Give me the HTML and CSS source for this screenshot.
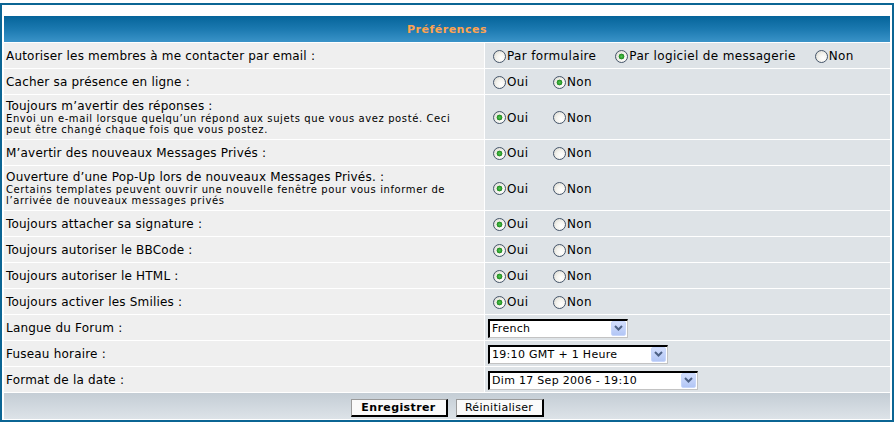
FILE: index.html
```html
<!DOCTYPE html>
<html lang="fr">
<head>
<meta charset="utf-8">
<title>Préférences</title>
<link rel="stylesheet" href="styles.css">
</head>
<body>
<form class="forumline">
  <div class="grid">
    <div class="th">Préférences</div>

    <div class="lbl">Autoriser les membres à me contacter par email :</div>
    <div class="val">
      <label class="opt wide"><input type="radio" name="contact"><span>Par formulaire</span></label>
      <label class="opt wide"><input type="radio" name="contact" checked><span>Par logiciel de messagerie</span></label>
      <label class="opt wide"><input type="radio" name="contact"><span>Non</span></label>
    </div>

    <div class="lbl">Cacher sa présence en ligne :</div>
    <div class="val">
      <label class="opt yn"><input type="radio" name="hide"><span>Oui</span></label>
      <label class="opt yn"><input type="radio" name="hide" checked><span>Non</span></label>
    </div>

    <div class="lbl tall">Toujours m’avertir des réponses :<span class="small">Envoi un e-mail lorsque quelqu’un répond aux sujets que vous avez posté. Ceci<br>peut être changé chaque fois que vous postez.</span></div>
    <div class="val">
      <label class="opt yn"><input type="radio" name="notify" checked><span>Oui</span></label>
      <label class="opt yn"><input type="radio" name="notify"><span>Non</span></label>
    </div>

    <div class="lbl">M’avertir des nouveaux Messages Privés :</div>
    <div class="val">
      <label class="opt yn"><input type="radio" name="notifypm" checked><span>Oui</span></label>
      <label class="opt yn"><input type="radio" name="notifypm"><span>Non</span></label>
    </div>

    <div class="lbl tall">Ouverture d’une Pop-Up lors de nouveaux Messages Privés. :<span class="small">Certains templates peuvent ouvrir une nouvelle fenêtre pour vous informer de<br>l’arrivée de nouveaux messages privés</span></div>
    <div class="val">
      <label class="opt yn"><input type="radio" name="popup" checked><span>Oui</span></label>
      <label class="opt yn"><input type="radio" name="popup"><span>Non</span></label>
    </div>

    <div class="lbl">Toujours attacher sa signature :</div>
    <div class="val">
      <label class="opt yn"><input type="radio" name="sig" checked><span>Oui</span></label>
      <label class="opt yn"><input type="radio" name="sig"><span>Non</span></label>
    </div>

    <div class="lbl">Toujours autoriser le BBCode :</div>
    <div class="val">
      <label class="opt yn"><input type="radio" name="bbcode" checked><span>Oui</span></label>
      <label class="opt yn"><input type="radio" name="bbcode"><span>Non</span></label>
    </div>

    <div class="lbl">Toujours autoriser le HTML :</div>
    <div class="val">
      <label class="opt yn"><input type="radio" name="html" checked><span>Oui</span></label>
      <label class="opt yn"><input type="radio" name="html"><span>Non</span></label>
    </div>

    <div class="lbl">Toujours activer les Smilies :</div>
    <div class="val">
      <label class="opt yn"><input type="radio" name="smilies" checked><span>Oui</span></label>
      <label class="opt yn"><input type="radio" name="smilies"><span>Non</span></label>
    </div>

    <div class="lbl">Langue du Forum :</div>
    <div class="val">
      <span class="sel w-lang">
        <select name="language"><option>French</option></select>
        <span class="arrow"><svg width="9" height="6" viewBox="0 0 9 6"><path d="M1 1 L4.5 4.5 L8 1" fill="none" stroke="#4d6185" stroke-width="2"/></svg></span>
      </span>
    </div>

    <div class="lbl">Fuseau horaire :</div>
    <div class="val">
      <span class="sel w-tz">
        <select name="timezone"><option>19:10 GMT + 1 Heure</option></select>
        <span class="arrow"><svg width="9" height="6" viewBox="0 0 9 6"><path d="M1 1 L4.5 4.5 L8 1" fill="none" stroke="#4d6185" stroke-width="2"/></svg></span>
      </span>
    </div>

    <div class="lbl">Format de la date :</div>
    <div class="val">
      <span class="sel w-date">
        <select name="dateformat"><option>Dim 17 Sep 2006 - 19:10</option></select>
        <span class="arrow"><svg width="9" height="6" viewBox="0 0 9 6"><path d="M1 1 L4.5 4.5 L8 1" fill="none" stroke="#4d6185" stroke-width="2"/></svg></span>
      </span>
    </div>

    <div class="foot">
      <button type="submit" class="btn main">Enregistrer</button>
      <button type="reset" class="btn lite">Réinitialiser</button>
    </div>
  </div>
</form>
</body>
</html>
```

FILE: styles.css
```css
* { box-sizing: border-box; }

body {
  margin: 0;
  background: #fff;
  color: #000;
  font-family: "DejaVu Sans", Verdana, sans-serif;
}

.forumline {
  margin: 3px 0 0 0;
  width: 894px;
  border: 2px solid #0b6594;
  padding: 11px 2px 1px 2px;
  background: #fff;
}

.grid {
  display: grid;
  grid-template-columns: 480px 1fr;
  gap: 1px;
}

.th {
  grid-column: 1 / -1;
  height: 26px;
  display: flex;
  align-items: center;
  justify-content: center;
  background: linear-gradient(to bottom, #05649a 0%, #1b79b0 50%, #3a93c8 100%);
  color: #ffa34f;
  font-size: 11px;
  font-weight: bold;
  letter-spacing: 0.5px;
}

.lbl {
  background: #efefef;
  min-height: 25px;
  padding: 1px 2px 0 2px;
  display: flex;
  flex-direction: column;
  justify-content: center;
  font-size: 12px;
  line-height: 14px;
  letter-spacing: 0.2px;
}

.lbl.tall {
  height: 44px;
  justify-content: flex-start;
  padding-top: 4px;
}

.small {
  font-size: 10px;
  line-height: 11px;
  letter-spacing: 0.6px;
}

.val {
  background: #dee3e7;
  min-height: 25px;
  padding: 1px 3px 0 3px;
  display: flex;
  align-items: center;
  font-size: 12px;
  letter-spacing: 0.35px;
}

.opt {
  display: flex;
  align-items: center;
}

.opt span { margin-left: 1px; }

.wide { margin-right: 14px; }

.yn { width: 60px; }

input[type="radio"] {
  appearance: none;
  -webkit-appearance: none;
  flex: none;
  width: 13px;
  height: 13px;
  margin: 0 0 0 5px;
  border: 1px solid #45556a;
  border-radius: 50%;
  background: radial-gradient(circle at 65% 65%, #ffffff 0, #f4f3ee 45%, #d3d2ca 100%);
}

input[type="radio"]:checked {
  background:
    radial-gradient(circle, #55c455 0, #2c9e2c 2px, #1d7f1d 2.6px, rgba(0,0,0,0) 3.2px),
    radial-gradient(circle at 65% 65%, #ffffff 0, #f4f3ee 45%, #d3d2ca 100%);
}

.sel {
  position: relative;
  display: inline-block;
  height: 19px;
}

.sel select {
  appearance: none;
  -webkit-appearance: none;
  width: 100%;
  height: 19px;
  margin: 0;
  padding: 0 0 0 2px;
  border-style: solid;
  border-width: 2px 1px 1px 2px;
  border-color: #000 #c3c3c3 #c3c3c3 #000;
  border-radius: 0;
  background: #fff;
  color: #000;
  font-family: "DejaVu Sans", Verdana, sans-serif;
  font-size: 11px;
  letter-spacing: 0.3px;
}

.w-lang { width: 140px; }
.w-tz { width: 180px; }
.w-date { width: 210px; }

.arrow {
  position: absolute;
  right: 2px;
  top: 2px;
  width: 15px;
  height: 15px;
  display: flex;
  align-items: center;
  justify-content: center;
  background: linear-gradient(to bottom, #d3defd, #b2c6f5);
  border: 1px solid #c7d6fb;
  border-radius: 2px;
  pointer-events: none;
}

.foot {
  grid-column: 1 / -1;
  height: 26px;
  padding-top: 6px;
  display: flex;
  justify-content: center;
  align-items: flex-start;
  gap: 8px;
  background: linear-gradient(to bottom, #c4cdd5, #dde3e8);
}

.btn {
  height: 18px;
  margin: 0;
  padding: 0;
  background: #fafafa;
  color: #000;
  font-family: "DejaVu Sans", Verdana, sans-serif;
  font-size: 11px;
  line-height: 14px;
  border-style: solid;
  border-width: 1px 2px 2px 1px;
  border-color: #9a9a9a #000 #000 #9a9a9a;
  border-radius: 0;
}

.main { width: 97px; font-weight: bold; letter-spacing: 0.4px; }
.lite { width: 88px; letter-spacing: 0.3px; }
```
